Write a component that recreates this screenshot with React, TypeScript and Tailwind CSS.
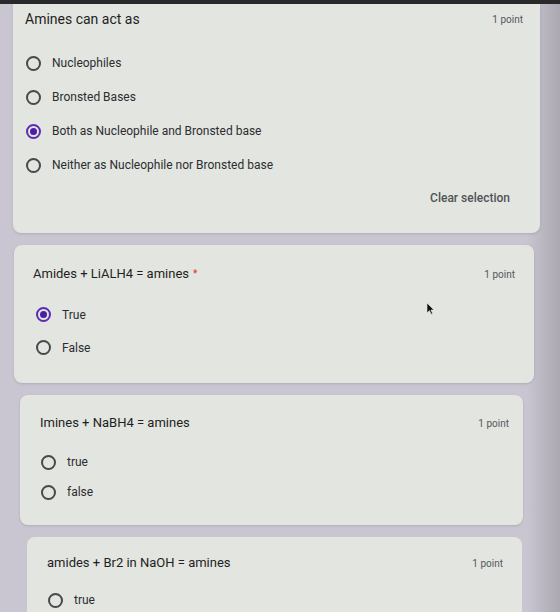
import React from 'react'

type RadioProps = {
  label: string
  checked?: boolean
  rowHeight: string
}

function Radio({ label, checked, rowHeight }: RadioProps) {
  return (
    <div className={`flex items-center gap-[11px] ${rowHeight}`}>
      {checked ? (
        <span className="flex h-[15px] w-[15px] items-center justify-center rounded-full border-2 border-[#5b2db3]">
          <span className="h-[7px] w-[7px] rounded-full bg-[#4b1fa3]" />
        </span>
      ) : (
        <span className="h-[15px] w-[15px] rounded-full border-2 border-[#47494c]" />
      )}
      <span className="text-[12px] leading-4 text-[#2b2d30]">{label}</span>
    </div>
  )
}

type HeaderProps = {
  title: string
  required?: boolean
  size: string
}

function Header({ title, required, size }: HeaderProps) {
  return (
    <div className="flex h-[20px] items-center justify-between">
      <h2 className={`${size} leading-5 text-[#1e1f22]`}>
        {title}
        {required && <span className="ml-[4px] align-top text-[10px] text-[#d93025]">*</span>}
      </h2>
      <span className="mt-[2px] text-[10px] leading-4 text-[#55585c]">1 point</span>
    </div>
  )
}

// small mouse pointer resting over the second card
function Pointer() {
  return (
    <svg
      className="absolute left-[412px] top-[57px]"
      width="9"
      height="13"
      viewBox="0 0 9 13"
    >
      <path d="M1 1 L1 11 L3.4 8.6 L5.2 12.2 L6.6 11.5 L4.9 8 L8 8 Z" fill="#111" stroke="#e6e6e6" strokeWidth="0.6" />
    </svg>
  )
}

export default function App() {
  return (
    <div
      className="flex h-[612px] w-[560px] flex-col overflow-hidden bg-linear-to-r from-[#cac6d1] from-[94%] to-[#aba8b2]"
      style={{ fontFamily: 'Roboto, "Liberation Sans", sans-serif' }}
    >
      <div className="h-[4px] shrink-0 bg-[#29292c]" />

      {/* question 1 */}
      <section className="ml-[13px] mr-[20px] h-[229px] shrink-0 rounded-b-lg bg-[#e3e5e0] pl-[12px] pr-[17px] pt-[5px] shadow-sm">
        <Header title="Amines can act as" size="text-[14px]" />
        <div className="mt-[17px] pl-[1px]">
          <Radio rowHeight="h-[34px]" label="Nucleophiles" />
          <Radio rowHeight="h-[34px]" label="Bronsted Bases" />
          <Radio rowHeight="h-[34px]" label="Both as Nucleophile and Bronsted base" checked />
          <Radio rowHeight="h-[34px]" label="Neither as Nucleophile nor Bronsted base" />
        </div>
        <div className="mt-[8px] flex justify-end">
          <button className="pr-[13px] text-[12px] font-medium leading-4 text-[#505357]">
            Clear selection
          </button>
        </div>
      </section>

      {/* question 2 */}
      <section className="relative ml-[14px] mr-[26px] mt-[12px] h-[138px] shrink-0 rounded-lg bg-[#e3e5e0] pl-[19px] pr-[19px] pt-[19px] shadow-sm">
        <Header title="Amides + LiALH4 = amines" required size="text-[13px]" />
        <div className="mt-[14px] pl-[3px]">
          <Radio rowHeight="h-[33px]" label="True" checked />
          <Radio rowHeight="h-[33px]" label="False" />
        </div>
        <Pointer />
      </section>

      {/* question 3 */}
      <section className="ml-[20px] mr-[37px] mt-[12px] h-[130px] shrink-0 rounded-lg bg-[#e3e5e0] pl-[20px] pr-[14px] pt-[18px] shadow-sm">
        <Header title="Imines + NaBH4 = amines" size="text-[13px]" />
        <div className="mt-[14px] pl-[1px]">
          <Radio rowHeight="h-[30px]" label="true" />
          <Radio rowHeight="h-[30px]" label="false" />
        </div>
      </section>

      {/* question 4 */}
      <section className="ml-[27px] mr-[38px] mt-[12px] flex-1 rounded-t-lg bg-[#e3e5e0] pl-[20px] pr-[19px] pt-[16px]">
        <Header title="amides + Br2 in NaOH = amines" size="text-[13px]" />
        <div className="mt-[12px] pl-[1px]">
          <Radio rowHeight="h-[30px]" label="true" />
        </div>
      </section>

      <div className="h-[4px] shrink-0 bg-[#1f1f21]" />
    </div>
  )
}
